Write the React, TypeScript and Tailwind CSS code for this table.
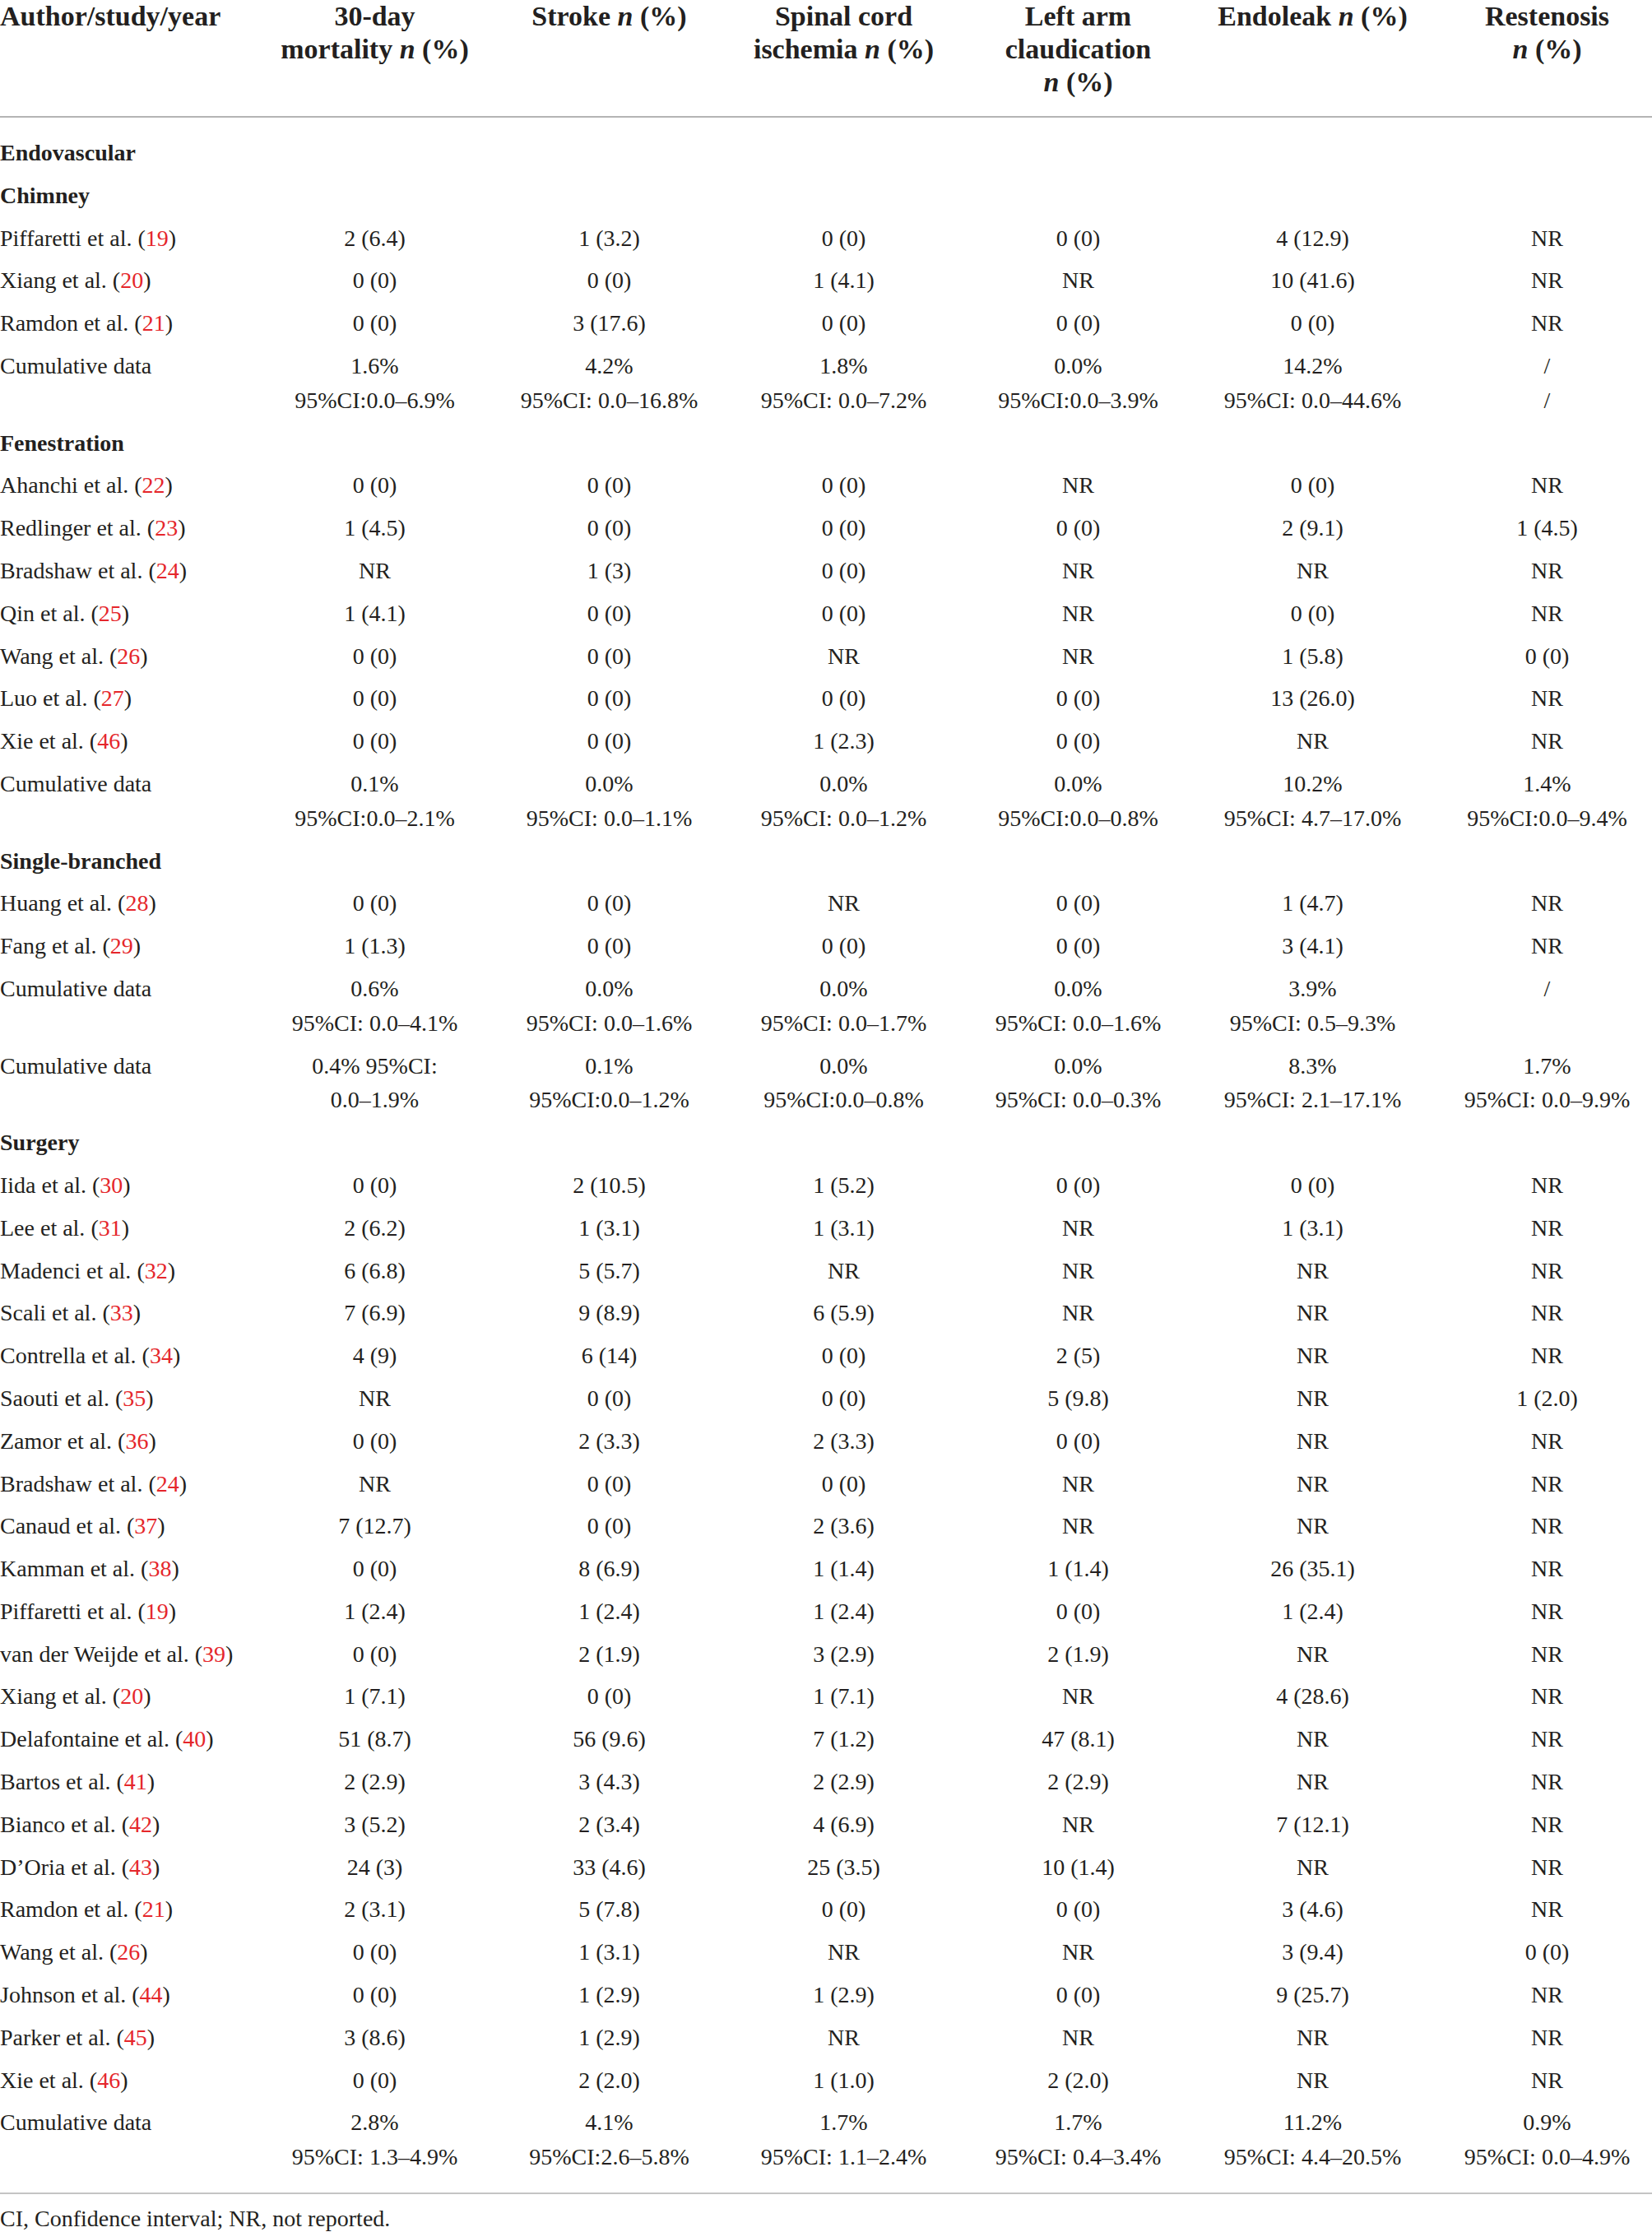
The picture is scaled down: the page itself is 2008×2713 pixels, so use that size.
import React from 'react';

type Row =
  | { kind: 'section'; label: string }
  | { kind: 'study'; name: string; ref: string; cells: string[] }
  | { kind: 'cumulative'; cells: [string, string][] };

const rows: Row[] = [
  { kind: 'section', label: 'Endovascular' },
  { kind: 'section', label: 'Chimney' },
  { kind: 'study', name: 'Piffaretti et al.', ref: '19', cells: ['2 (6.4)', '1 (3.2)', '0 (0)', '0 (0)', '4 (12.9)', 'NR'] },
  { kind: 'study', name: 'Xiang et al.', ref: '20', cells: ['0 (0)', '0 (0)', '1 (4.1)', 'NR', '10 (41.6)', 'NR'] },
  { kind: 'study', name: 'Ramdon et al.', ref: '21', cells: ['0 (0)', '3 (17.6)', '0 (0)', '0 (0)', '0 (0)', 'NR'] },
  {
    kind: 'cumulative',
    cells: [
      ['1.6%', '95%CI:0.0–6.9%'],
      ['4.2%', '95%CI: 0.0–16.8%'],
      ['1.8%', '95%CI: 0.0–7.2%'],
      ['0.0%', '95%CI:0.0–3.9%'],
      ['14.2%', '95%CI: 0.0–44.6%'],
      ['/', '/'],
    ],
  },
  { kind: 'section', label: 'Fenestration' },
  { kind: 'study', name: 'Ahanchi et al.', ref: '22', cells: ['0 (0)', '0 (0)', '0 (0)', 'NR', '0 (0)', 'NR'] },
  { kind: 'study', name: 'Redlinger et al.', ref: '23', cells: ['1 (4.5)', '0 (0)', '0 (0)', '0 (0)', '2 (9.1)', '1 (4.5)'] },
  { kind: 'study', name: 'Bradshaw et al.', ref: '24', cells: ['NR', '1 (3)', '0 (0)', 'NR', 'NR', 'NR'] },
  { kind: 'study', name: 'Qin et al.', ref: '25', cells: ['1 (4.1)', '0 (0)', '0 (0)', 'NR', '0 (0)', 'NR'] },
  { kind: 'study', name: 'Wang et al.', ref: '26', cells: ['0 (0)', '0 (0)', 'NR', 'NR', '1 (5.8)', '0 (0)'] },
  { kind: 'study', name: 'Luo et al.', ref: '27', cells: ['0 (0)', '0 (0)', '0 (0)', '0 (0)', '13 (26.0)', 'NR'] },
  { kind: 'study', name: 'Xie et al.', ref: '46', cells: ['0 (0)', '0 (0)', '1 (2.3)', '0 (0)', 'NR', 'NR'] },
  {
    kind: 'cumulative',
    cells: [
      ['0.1%', '95%CI:0.0–2.1%'],
      ['0.0%', '95%CI: 0.0–1.1%'],
      ['0.0%', '95%CI: 0.0–1.2%'],
      ['0.0%', '95%CI:0.0–0.8%'],
      ['10.2%', '95%CI: 4.7–17.0%'],
      ['1.4%', '95%CI:0.0–9.4%'],
    ],
  },
  { kind: 'section', label: 'Single-branched' },
  { kind: 'study', name: 'Huang et al.', ref: '28', cells: ['0 (0)', '0 (0)', 'NR', '0 (0)', '1 (4.7)', 'NR'] },
  { kind: 'study', name: 'Fang et al.', ref: '29', cells: ['1 (1.3)', '0 (0)', '0 (0)', '0 (0)', '3 (4.1)', 'NR'] },
  {
    kind: 'cumulative',
    cells: [
      ['0.6%', '95%CI: 0.0–4.1%'],
      ['0.0%', '95%CI: 0.0–1.6%'],
      ['0.0%', '95%CI: 0.0–1.7%'],
      ['0.0%', '95%CI: 0.0–1.6%'],
      ['3.9%', '95%CI: 0.5–9.3%'],
      ['/', ''],
    ],
  },
  {
    kind: 'cumulative',
    cells: [
      ['0.4% 95%CI:', '0.0–1.9%'],
      ['0.1%', '95%CI:0.0–1.2%'],
      ['0.0%', '95%CI:0.0–0.8%'],
      ['0.0%', '95%CI: 0.0–0.3%'],
      ['8.3%', '95%CI: 2.1–17.1%'],
      ['1.7%', '95%CI: 0.0–9.9%'],
    ],
  },
  { kind: 'section', label: 'Surgery' },
  { kind: 'study', name: 'Iida et al.', ref: '30', cells: ['0 (0)', '2 (10.5)', '1 (5.2)', '0 (0)', '0 (0)', 'NR'] },
  { kind: 'study', name: 'Lee et al.', ref: '31', cells: ['2 (6.2)', '1 (3.1)', '1 (3.1)', 'NR', '1 (3.1)', 'NR'] },
  { kind: 'study', name: 'Madenci et al.', ref: '32', cells: ['6 (6.8)', '5 (5.7)', 'NR', 'NR', 'NR', 'NR'] },
  { kind: 'study', name: 'Scali et al.', ref: '33', cells: ['7 (6.9)', '9 (8.9)', '6 (5.9)', 'NR', 'NR', 'NR'] },
  { kind: 'study', name: 'Contrella et al.', ref: '34', cells: ['4 (9)', '6 (14)', '0 (0)', '2 (5)', 'NR', 'NR'] },
  { kind: 'study', name: 'Saouti et al.', ref: '35', cells: ['NR', '0 (0)', '0 (0)', '5 (9.8)', 'NR', '1 (2.0)'] },
  { kind: 'study', name: 'Zamor et al.', ref: '36', cells: ['0 (0)', '2 (3.3)', '2 (3.3)', '0 (0)', 'NR', 'NR'] },
  { kind: 'study', name: 'Bradshaw et al.', ref: '24', cells: ['NR', '0 (0)', '0 (0)', 'NR', 'NR', 'NR'] },
  { kind: 'study', name: 'Canaud et al.', ref: '37', cells: ['7 (12.7)', '0 (0)', '2 (3.6)', 'NR', 'NR', 'NR'] },
  { kind: 'study', name: 'Kamman et al.', ref: '38', cells: ['0 (0)', '8 (6.9)', '1 (1.4)', '1 (1.4)', '26 (35.1)', 'NR'] },
  { kind: 'study', name: 'Piffaretti et al.', ref: '19', cells: ['1 (2.4)', '1 (2.4)', '1 (2.4)', '0 (0)', '1 (2.4)', 'NR'] },
  { kind: 'study', name: 'van der Weijde et al.', ref: '39', cells: ['0 (0)', '2 (1.9)', '3 (2.9)', '2 (1.9)', 'NR', 'NR'] },
  { kind: 'study', name: 'Xiang et al.', ref: '20', cells: ['1 (7.1)', '0 (0)', '1 (7.1)', 'NR', '4 (28.6)', 'NR'] },
  { kind: 'study', name: 'Delafontaine et al.', ref: '40', cells: ['51 (8.7)', '56 (9.6)', '7 (1.2)', '47 (8.1)', 'NR', 'NR'] },
  { kind: 'study', name: 'Bartos et al.', ref: '41', cells: ['2 (2.9)', '3 (4.3)', '2 (2.9)', '2 (2.9)', 'NR', 'NR'] },
  { kind: 'study', name: 'Bianco et al.', ref: '42', cells: ['3 (5.2)', '2 (3.4)', '4 (6.9)', 'NR', '7 (12.1)', 'NR'] },
  { kind: 'study', name: 'D’Oria et al.', ref: '43', cells: ['24 (3)', '33 (4.6)', '25 (3.5)', '10 (1.4)', 'NR', 'NR'] },
  { kind: 'study', name: 'Ramdon et al.', ref: '21', cells: ['2 (3.1)', '5 (7.8)', '0 (0)', '0 (0)', '3 (4.6)', 'NR'] },
  { kind: 'study', name: 'Wang et al.', ref: '26', cells: ['0 (0)', '1 (3.1)', 'NR', 'NR', '3 (9.4)', '0 (0)'] },
  { kind: 'study', name: 'Johnson et al.', ref: '44', cells: ['0 (0)', '1 (2.9)', '1 (2.9)', '0 (0)', '9 (25.7)', 'NR'] },
  { kind: 'study', name: 'Parker et al.', ref: '45', cells: ['3 (8.6)', '1 (2.9)', 'NR', 'NR', 'NR', 'NR'] },
  { kind: 'study', name: 'Xie et al.', ref: '46', cells: ['0 (0)', '2 (2.0)', '1 (1.0)', '2 (2.0)', 'NR', 'NR'] },
  {
    kind: 'cumulative',
    cells: [
      ['2.8%', '95%CI: 1.3–4.9%'],
      ['4.1%', '95%CI:2.6–5.8%'],
      ['1.7%', '95%CI: 1.1–2.4%'],
      ['1.7%', '95%CI: 0.4–3.4%'],
      ['11.2%', '95%CI: 4.4–20.5%'],
      ['0.9%', '95%CI: 0.0–4.9%'],
    ],
  },
];

const N = () => <i>n</i>;

export default function App() {
  return (
    <div className="w-[2008px] overflow-hidden bg-white text-[#231f20] font-['Liberation_Serif','Times_New_Roman',serif] text-[28px]">
      <table className="w-[2023px] table-fixed border-collapse">
        <thead>
          <tr className="border-b-2 border-[#b4b4b4] align-top text-[34px] font-bold leading-[40px]">
            <th className="w-[313px] pb-[21px] text-left font-bold">Author/study/year</th>
            <th className="w-[285px] pb-[21px] text-center font-bold">
              30-day
              <br />
              mortality <N /> (%)
            </th>
            <th className="w-[285px] pb-[21px] text-center font-bold">
              Stroke <N /> (%)
            </th>
            <th className="w-[285px] pb-[21px] text-center font-bold">
              Spinal cord
              <br />
              ischemia <N /> (%)
            </th>
            <th className="w-[285px] pb-[21px] text-center font-bold">
              Left arm
              <br />
              claudication
              <br />
              <N /> (%)
            </th>
            <th className="w-[285px] pb-[21px] text-center font-bold">
              Endoleak <N /> (%)
            </th>
            <th className="w-[285px] pb-[21px] text-center font-bold">
              Restenosis
              <br />
              <N /> (%)
            </th>
          </tr>
        </thead>
        <tbody className="leading-[41.8px]">
          <tr>
            <td colSpan={7} className="h-[18px] p-0" />
          </tr>
          {rows.map((r, i) => {
            if (r.kind === 'section') {
              return (
                <tr key={i}>
                  <td colSpan={7} className="py-[5px] text-left font-bold">
                    {r.label}
                  </td>
                </tr>
              );
            }
            if (r.kind === 'study') {
              return (
                <tr key={i}>
                  <td className="whitespace-nowrap py-[5px] text-left">
                    {r.name} (<span className="text-[#e5262b]">{r.ref}</span>)
                  </td>
                  {r.cells.map((c, j) => (
                    <td key={j} className="py-[5px] text-center">
                      {c}
                    </td>
                  ))}
                </tr>
              );
            }
            return (
              <tr key={i} className="align-top">
                <td className="py-[5px] text-left">Cumulative data</td>
                {r.cells.map(([a, b], j) => (
                  <td key={j} className="whitespace-nowrap py-[5px] text-center">
                    <div>{a}</div>
                    <div className="h-[41.8px]">{b}</div>
                  </td>
                ))}
              </tr>
            );
          })}
          <tr>
            <td colSpan={7} className="h-[17px] p-0" />
          </tr>
        </tbody>
      </table>
      <div className="border-t-2 border-[#c4c4c4] pt-[9px] pb-[6px] leading-[42px]">
        CI, Confidence interval; NR, not reported.
      </div>
    </div>
  );
}
